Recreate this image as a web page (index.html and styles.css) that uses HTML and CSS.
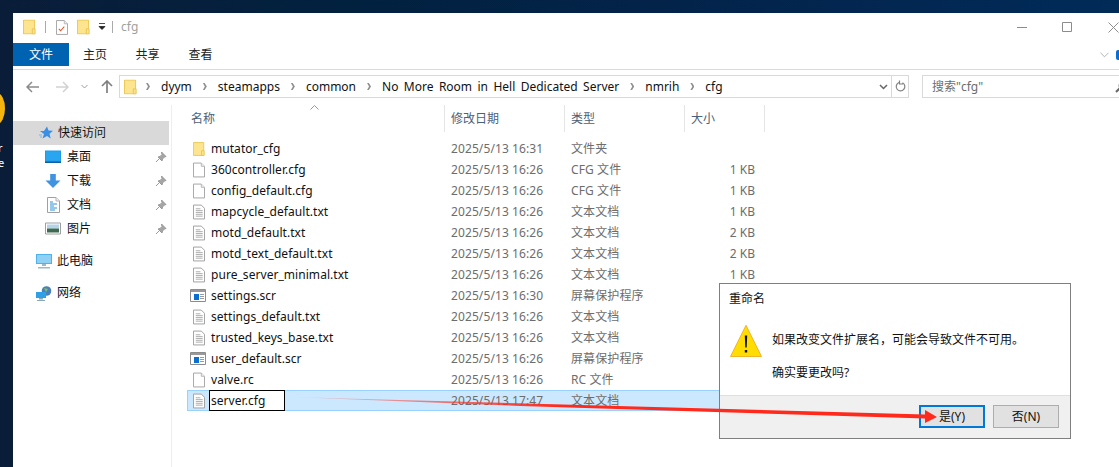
FILE: index.html
```html
<!DOCTYPE html>
<html lang="zh-CN">
<head>
<meta charset="utf-8">
<title>cfg</title>
<link rel="stylesheet" href="styles.css">
</head>
<body>
<svg class="defs" width="0" height="0">
  <symbol id="folder" viewBox="0 0 14 16"><path d="M.5.5h12v15H.5z" fill="#fde58f" stroke="#e8c44f"/><path d="M10 10h3v5.500h-3z" fill="#fde58f" stroke="#e8c44f"/></symbol>
  <symbol id="blank" viewBox="0 0 13 16"><path d="M.5.500h8.500l3.500 3.500v11.500H.5z" fill="#fff" stroke="#a0a0a0"/><path d="M9 .5v3.500h3.500" fill="#eee" stroke="#b5b5b5"/></symbol>
  <symbol id="text" viewBox="0 0 13 16"><path d="M.5.500h8.500l3.500 3.500v11.500H.5z" fill="#fff" stroke="#9a9a9a"/><path d="M3 4.500h5M3 6.500h7.500M3 8.500h7.500M3 10.500h7.500M3 12.500h7.500" stroke="#a8a8a8"/></symbol>
  <symbol id="scr" viewBox="0 0 16 13"><path d="M.5.500h15v12H.5z" fill="#fff" stroke="#8c8c8c"/><path d="M1 1h14v2H1z" fill="#9a9a9a"/><path d="M4 5h5v6H4z" fill="#0a6fd0"/><path d="M10 5.500h4M10 7.500h4M10 9.500h4" stroke="#9a9a9a"/></symbol>
  <symbol id="pin" viewBox="0 0 12 12"><path d="M6.500 1l4.500 4.500-1.500 .5-2 2-.5 2-4-4 2-.5 2-2zM4 8l-3 3" fill="#a5a5a5" stroke="#9a9a9a"/></symbol>
</svg>

<div class="desktop-badge"></div>
<div class="desktop-label">r<br>e</div>

<main class="window">
  <header class="titlebar">
    <svg class="ic14" viewBox="0 0 14 16"><use href="#folder"/></svg>
    <span class="tsep"></span>
    <svg class="ic13" viewBox="0 0 13 16"><use href="#blank"/><path d="M3 9.500l2 2 4-4.500" fill="none" stroke="#e0562b" stroke-width="1.100"/></svg>
    <svg class="ic14 gap9" viewBox="0 0 14 16"><use href="#folder"/></svg>
    <svg class="qat" viewBox="0 0 8 8"><path d="M1 .5h6M1 3.500h6L4 6.500z" fill="#222" stroke="#222" stroke-width=".8"/></svg>
    <span class="tsep"></span>
    <span class="wintitle">cfg</span>
    <span class="winbtns">
      <svg class="wb" viewBox="0 0 11 11"><path d="M0 5.500h10" stroke="#8c8c8c"/></svg>
      <svg class="wb" viewBox="0 0 11 11"><path d="M.5.500h9v9h-9z" fill="none" stroke="#8c8c8c"/></svg>
      <svg class="wb" viewBox="0 0 11 11"><path d="M.5.500l10 10M10.500.500l-10 10" stroke="#8c8c8c"/></svg>
    </span>
  </header>

  <nav class="tabs">
    <span class="tab file">文件</span>
    <span class="tab">主页</span>
    <span class="tab">共享</span>
    <span class="tab">查看</span>
    <span class="ribbon-end">
      <svg class="rchev" viewBox="0 0 10 6"><path d="M.5.500L5 5l4.500-4.500" fill="none" stroke="#aaa"/></svg>
      <span class="help"></span>
    </span>
  </nav>

  <div class="addressrow">
    <svg class="navic" viewBox="0 0 13 12"><path d="M1 6h12M6 1L1 6l5 5" fill="none" stroke="#8a8a8a" stroke-width="1.500"/></svg>
    <svg class="navic fwd" viewBox="0 0 13 12"><path d="M0 6h12M7 1l5 5-5 5" fill="none" stroke="#d2d2d2" stroke-width="1.500"/></svg>
    <svg class="navchev" viewBox="0 0 7 5"><path d="M.5 1l3 3 3-3" fill="none" stroke="#9c9c9c"/></svg>
    <svg class="navup" viewBox="0 0 12 13"><path d="M6 13V1M1 6l5-5 5 5" fill="none" stroke="#808080" stroke-width="1.700"/></svg>
    <div class="address">
      <svg class="addrfolder" viewBox="0 0 14 16"><use href="#folder"/></svg>
      <span class="crumbs">
        <i class="sep"></i><span>dyym</span>
        <i class="sep"></i><span>steamapps</span>
        <i class="sep"></i><span>common</span>
        <i class="sep"></i><span>No More Room in Hell Dedicated Server</span>
        <i class="sep"></i><span>nmrih</span>
        <i class="sep"></i><span>cfg</span>
      </span>
      <svg class="addrdrop" viewBox="0 0 9 6"><path d="M1 1l3.500 3.500L8 1" fill="none" stroke="#666" stroke-width="1.500"/></svg>
      <span class="refresh"><svg class="refic" viewBox="0 0 11 13"><path d="M4 2.500a4.300 4.300 0 1 0 3.500 .2M4.500 .5v3.500H8" fill="none" stroke="#808080" stroke-width="1.200"/></svg></span>
    </div>
    <div class="search">
      <span>搜索"cfg"</span>
      <svg class="searchic" viewBox="0 0 12 12"><circle cx="7.500" cy="4.500" r="3.200" fill="none" stroke="#666" stroke-width="1.400"/><path d="M5 7l-4 4" stroke="#666" stroke-width="2"/></svg>
    </div>
  </div>

  <div class="body">
    <aside class="sidebar">
      <div class="side head active">
        <svg class="sic" viewBox="0 0 14 14"><path d="M8 .5l1.500 4 4.500 .3-3.500 3 1.200 4.700L8 10l-4.500 2.500L5 8 1 5h4z" fill="#3a8ee6"/><path d="M0 9h3M1 11h2" stroke="#7ab6ef"/></svg>
        <span>快速访问</span>
      </div>
      <div class="side sub">
        <svg class="sic2" viewBox="0 0 16 13"><path d="M0 0h16v12H0z" fill="#1e9be8"/><path d="M1 1h14v9H1z" fill="#2aa5f0"/><path d="M0 11h16v1.500H0z" fill="#0d5fa8"/></svg>
        <span>桌面</span><svg class="pin"><use href="#pin"/></svg>
      </div>
      <div class="side sub">
        <svg class="sic2" viewBox="0 0 16 15"><path d="M5 0h6v7h5l-8 8-8-8h5z" fill="#3f93e0"/></svg>
        <span>下载</span><svg class="pin"><use href="#pin"/></svg>
      </div>
      <div class="side sub">
        <svg class="sic2 small" viewBox="0 0 13 16"><use href="#blank"/><path d="M3 5h3M3 7h7M3 9h4M3 11h7M3 13h5" stroke="#2d8fd8"/></svg>
        <span>文档</span><svg class="pin"><use href="#pin"/></svg>
      </div>
      <div class="side sub">
        <svg class="sic2" viewBox="0 0 16 13"><path d="M.5.500h15v11H.5z" fill="#fff" stroke="#9e9e9e"/><path d="M2 2h12v4H2z" fill="#b5d4ea"/><path d="M2 6h12v4H2z" fill="#3d6a50"/></svg>
        <span>图片</span><svg class="pin"><use href="#pin"/></svg>
      </div>
      <div class="side head spaced">
        <svg class="sic wide" viewBox="0 0 16 15"><path d="M0 0h16v10H0z" fill="#4db3ea"/><path d="M1 1h14v8H1z" fill="#8ed1f4"/><path d="M6 10h4v2H6zM2 13h12v1.500H2z" fill="#9fb8c8"/></svg>
        <span>此电脑</span>
      </div>
      <div class="side head spaced">
        <svg class="sic wide" viewBox="0 0 16 15"><circle cx="10.500" cy="5" r="4.800" fill="#4a7fb8"/><path d="M8 2l4 1-2 3z" fill="#7fc06a"/><path d="M0 6h10v6H0z" fill="#2f9fe6"/><path d="M3 12h4v1.500H3zM1 14h8v1H1z" fill="#8aa9bd"/></svg>
        <span>网络</span>
      </div>
    </aside>

    <section class="files">
      <div class="columns">
        <div class="col first">名称<svg class="sort" viewBox="0 0 9 5"><path d="M.5 4.500L4.500 .5l4 4" fill="none" stroke="#9a9a9a"/></svg></div>
        <div class="col">修改日期</div>
        <div class="col">类型</div>
        <div class="col">大小</div>
      </div>

      <div class="row"><div class="name"><svg class="fi"><use href="#folder"/></svg><span>mutator_cfg</span></div><div class="meta">2025/5/13 16:31</div><div class="meta">文件夹</div><div class="size"></div></div>
      <div class="row"><div class="name"><svg class="fi"><use href="#blank"/></svg><span>360controller.cfg</span></div><div class="meta">2025/5/13 16:26</div><div class="meta">CFG 文件</div><div class="size">1 KB</div></div>
      <div class="row"><div class="name"><svg class="fi"><use href="#blank"/></svg><span>config_default.cfg</span></div><div class="meta">2025/5/13 16:26</div><div class="meta">CFG 文件</div><div class="size">1 KB</div></div>
      <div class="row"><div class="name"><svg class="fi"><use href="#text"/></svg><span>mapcycle_default.txt</span></div><div class="meta">2025/5/13 16:26</div><div class="meta">文本文档</div><div class="size">1 KB</div></div>
      <div class="row"><div class="name"><svg class="fi"><use href="#text"/></svg><span>motd_default.txt</span></div><div class="meta">2025/5/13 16:26</div><div class="meta">文本文档</div><div class="size">2 KB</div></div>
      <div class="row"><div class="name"><svg class="fi"><use href="#text"/></svg><span>motd_text_default.txt</span></div><div class="meta">2025/5/13 16:26</div><div class="meta">文本文档</div><div class="size">2 KB</div></div>
      <div class="row"><div class="name"><svg class="fi"><use href="#text"/></svg><span>pure_server_minimal.txt</span></div><div class="meta">2025/5/13 16:26</div><div class="meta">文本文档</div><div class="size">1 KB</div></div>
      <div class="row"><div class="name"><svg class="fi scr"><use href="#scr"/></svg><span>settings.scr</span></div><div class="meta">2025/5/13 16:30</div><div class="meta">屏幕保护程序</div><div class="size"></div></div>
      <div class="row"><div class="name"><svg class="fi"><use href="#text"/></svg><span>settings_default.txt</span></div><div class="meta">2025/5/13 16:26</div><div class="meta">文本文档</div><div class="size"></div></div>
      <div class="row"><div class="name"><svg class="fi"><use href="#text"/></svg><span>trusted_keys_base.txt</span></div><div class="meta">2025/5/13 16:26</div><div class="meta">文本文档</div><div class="size"></div></div>
      <div class="row"><div class="name"><svg class="fi scr"><use href="#scr"/></svg><span>user_default.scr</span></div><div class="meta">2025/5/13 16:26</div><div class="meta">屏幕保护程序</div><div class="size"></div></div>
      <div class="row"><div class="name"><svg class="fi"><use href="#blank"/></svg><span>valve.rc</span></div><div class="meta">2025/5/13 16:26</div><div class="meta">RC 文件</div><div class="size"></div></div>
      <div class="row selected"><div class="name"><svg class="fi"><use href="#text"/></svg><span class="rename">server.cfg</span></div><div class="meta">2025/5/13 17:47</div><div class="meta">文本文档</div><div class="size"></div></div>
    </section>
  </div>
</main>

<div class="dialog">
  <div class="dlgtitle">重命名</div>
  <div class="dlgbody">
    <svg class="warn" viewBox="0 0 32 32"><path d="M16 .8L31.500 32H.5z" fill="#ffdd00" stroke="#f0b428"/><path d="M14.800 11h2.400l-.5 12h-1.400zM14.800 25.500h2.400v2.500h-2.400z" fill="#111"/></svg>
    <div class="dlgtext">
      <p>如果改变文件扩展名，可能会导致文件不可用。</p>
      <p>确实要更改吗?</p>
    </div>
  </div>
  <div class="dlgfoot">
    <span class="btn primary">是(Y)</span>
    <span class="btn">否(N)</span>
  </div>
</div>

<svg class="arrow" width="1119" height="467" viewBox="0 0 1119 467"><defs><linearGradient id="fade" x1="290" x2="560" y1="0" y2="0" gradientUnits="userSpaceOnUse"><stop offset="0" stop-color="#ff2a1c" stop-opacity=".1"/><stop offset="1" stop-color="#ff2a1c"/></linearGradient></defs><path d="M290 397L925 414.500L925 410L937 417L925 423L925 418.500L520 406z" fill="url(#fade)"/></svg>
</body>
</html>
```
FILE: styles.css
```css
* { box-sizing: border-box; }
html, body { margin: 0; height: 467px; overflow: hidden; }
body {
  position: relative;
  padding: 13px 0 0 13px;
  background: linear-gradient(90deg, #0a1d38 0, #02213f 30%, #03234a 60%, #012b58 100%);
  font: 12px/1 "Noto Sans", "Noto Sans CJK SC", sans-serif;
  color: #111;
}
.defs { position: absolute; }
.desktop-badge {
  position: absolute; left: -11px; top: 93px;
  width: 16px; height: 31px; border-radius: 50%;
  background: #f5b50f;
}
.desktop-label { position: absolute; left: -2px; top: 140px; color: #fff; font-size: 11px; line-height: 15px; }

.window { height: 454px; background: #fff; display: flex; flex-direction: column; overflow: hidden; }

.titlebar { height: 30px; flex: none; display: flex; align-items: center; padding: 0 0 2px 10px; }
.ic14 { width: 13px; height: 16px; flex: none; }
.ic13 { width: 12px; height: 15px; flex: none; margin-left: -1px; }
.gap9 { margin-left: 9px; }
.tsep { width: 1px; height: 12px; background: #aaa; margin: 0 11px 0 9px; }
.qat { width: 8px; height: 8px; margin-left: 8px; margin-right: -3px; }
.wintitle { color: #a0a0a0; margin-left: -3px; font-size: 12px; }
.winbtns { margin-left: auto; display: flex; gap: 34px; }
.wb { width: 11px; height: 11px; display: block; }
.wb:last-child { margin-left: 1px; }

.tabs { height: 26px; flex: none; display: flex; align-items: flex-start; }
.tab { width: 53px; height: 23px; line-height: 23px; text-align: center; color: #222; }
.tab.file { width: 56px; background: #0063b1; color: #fff; }
.tab.file + .tab { width: 52px; }
.ribbon-end { margin-left: auto; height: 23px; display: flex; align-items: center; gap: 7px; }
.rchev { width: 9px; height: 6px; }
.help { width: 3px; height: 10px; background: #0a6fd0; border-radius: 2px 0 0 2px; display: block; }

.addressrow {
  height: 36px; flex: none;
  border-top: 1px solid #dadada;
  display: flex; align-items: center;
  padding: 0 0 2px 13px;
}
.navic { width: 13px; height: 12px; flex: none; }
.navic.fwd { margin-left: 17px; }
.navchev { width: 7px; height: 5px; margin-left: 12px; flex: none; }
.navup { width: 12px; height: 13px; margin-left: 13px; flex: none; }
.address {
  width: 790px; height: 23px; margin-left: 6px; flex: none;
  border: 1px solid #d9d9d9;
  display: flex; align-items: center;
  padding-left: 4px;
}
.addrfolder { width: 13px; height: 16px; flex: none; margin-right: -2px; }
.crumbs { display: flex; align-items: center; font-size: 12px; word-spacing: 2.300px; color: #111; }
.sep {
  width: 4px; height: 7px; margin: 0 11px; display: block; background: #8f8f8f;
  clip-path: polygon(0 0, 45% 0, 100% 50%, 45% 100%, 0 100%, 50% 50%);
}
.addrdrop { width: 9px; height: 6px; margin-left: auto; margin-right: 3px; }
.refresh { width: 17px; height: 21px; border-left: 1px solid #d9d9d9; display: flex; align-items: center; justify-content: center; }
.refic { width: 11px; height: 13px; }
.search {
  width: 210px; height: 23px; margin-left: 13px; flex: none;
  border: 1px solid #d9d9d9;
  display: flex; align-items: center;
  padding: 0 4px 0 9px;
  color: #6d6d6d;
}
.searchic { width: 12px; height: 12px; margin-left: auto; }

.body { flex: 1; display: flex; min-height: 0; }
.sidebar { width: 159px; flex: none; border-right: 1px solid #eeeeee; padding-top: 16px; }
.side { height: 24px; width: 156px; display: flex; align-items: center; }
.side.active { background: #d9d9d9; }
.side.head { padding-left: 26px; }
.side.sub { padding-left: 32px; }
.side.spaced { margin-top: 8px; }
.sic { width: 14px; height: 14px; margin-right: 5px; flex: none; }
.sic.wide { width: 16px; height: 15px; margin-left: -3px; margin-right: 5px; }
.sic2 { width: 16px; height: 14px; margin-right: 6px; flex: none; }
.sic2.small { width: 13px; height: 16px; margin-left: 2px; margin-right: 7px; }
.pin { width: 12px; height: 12px; margin-left: auto; margin-right: 2px; }

.files { flex: 1; padding-left: 15px; }
.columns { display: grid; grid-template-columns: 258px 120px 120px 80px; width: 578px; height: 33px; }
.col { height: 27px; padding: 0 0 0 6px; line-height: 27px; color: #4c607a; border-right: 1px solid #e5e5e5; position: relative; }
.col.first { padding-left: 4px; }
.sort { position: absolute; left: 123px; top: 0; width: 9px; height: 5px; }
.row { display: grid; grid-template-columns: 258px 120px 120px 80px; width: 578px; height: 21px; align-items: center; }
.row.selected { background: #cce8ff; box-shadow: inset 0 0 0 1px #99d1ff; }
.name { display: flex; align-items: center; padding-left: 6px; color: #111; font-size: 12px; letter-spacing: .05px; }
.fi { width: 12px; height: 16px; margin-right: 6px; flex: none; }
.fi.scr { width: 16px; height: 13px; margin-left: -3px; margin-right: 5px; }
.meta { padding-left: 6px; color: #6d6d6d; letter-spacing: .1px; }
.size { text-align: right; padding-right: 10px; color: #6d6d6d; }
.rename {
  width: 76px; height: 21px; line-height: 19px;
  border: 1px solid #000; background: #fff;
  padding-left: 1px; margin-left: -2px;
}

.dialog {
  position: absolute; left: 719px; top: 283px;
  width: 352px; height: 156px;
  background: #fff; border: 1px solid #7f7f7f;
  display: flex; flex-direction: column;
}
.dlgtitle { height: 28px; flex: none; padding: 9px 0 0 9px; font-size: 12px; color: #111; }
.dlgbody { flex: 1; min-height: 0; display: flex; padding: 12px 0 0 10px; }
.warn { width: 32px; height: 33px; flex: none; }
.dlgtext { margin-left: 10px; }
.dlgtext p { margin: 10px 0 21px; line-height: 12px; color: #111; }
.dlgfoot {
  height: 43px; flex: none;
  background: #f0f0f0; border-top: 1px solid #dfdfdf;
  display: flex; justify-content: flex-end; align-items: flex-start;
  gap: 8px; padding: 9px 11px 0 0;
}
.btn {
  width: 66px; height: 23px; line-height: 21px; text-align: center;
  background: #e1e1e1; border: 1px solid #adadad; color: #111;
}
.btn.primary { border: 2px solid #0078d7; line-height: 19px; }
.arrow { position: absolute; left: 0; top: 0; pointer-events: none; }
```
